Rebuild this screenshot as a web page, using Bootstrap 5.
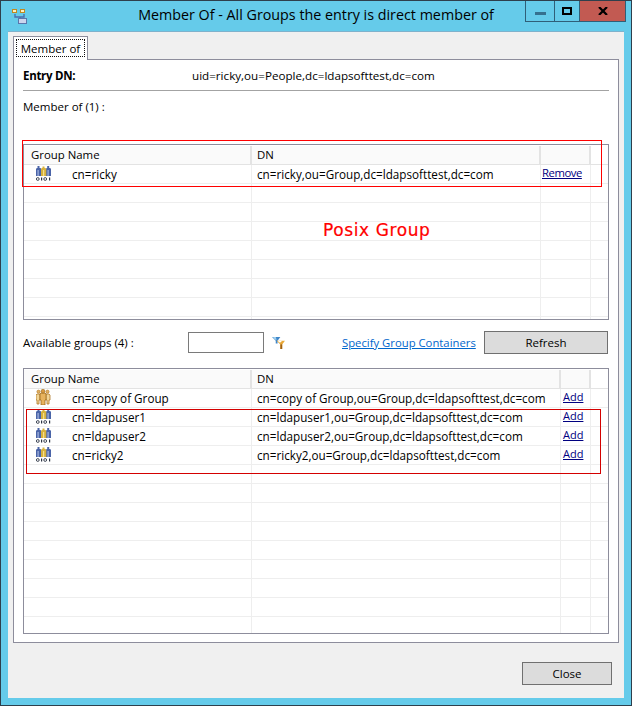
<!DOCTYPE html>
<html lang="en">
<head>
<meta charset="utf-8">
<title>Member Of</title>
<link href="https://cdn.jsdelivr.net/npm/bootstrap@5.3.0/dist/css/bootstrap.min.css" rel="stylesheet">
<style>
html,body{margin:0;background:#65cbea;}
body{font-family:"Open Sans","Liberation Sans",sans-serif;font-size:11.5px;line-height:18px;color:#000;}
.win{width:632px;height:706px;border:1px solid #2e3f4c;background:#65cbea;overflow:hidden;}
.titlebar{height:30px;display:grid;grid-template-columns:1fr auto 1fr;}
.wintitle{font-size:14.3px;line-height:28px;color:#000;}
.appicon{margin:7px 0 0 10px;display:block;}
.winbtns{height:21px;border:1px solid #2f5f78;border-top:0;margin-right:5px;}
.winbtn{height:20px;border-right:1px solid #2f5f78;}
.wb-min{width:29px;}.wb-max{width:25px;}.wb-close{width:45px;border-right:0;background:#c25a52;}
.client{margin:0 7px;height:667px;background:#f0f0f0;border-top:1px solid #7fb2cc;padding-top:4px;}
.tabstrip.nav-tabs{border:0;margin-left:5px;height:23px;--bs-nav-tabs-border-width:0;}
.tabstrip .nav-link.active{width:75px;height:24px;padding:2px;margin:0;background:#fff;border:1px solid #8d8d9c;border-bottom:0;border-radius:0;color:#000;font-size:11.5px;line-height:17px;position:relative;z-index:2;}
.tabfocus{display:block;border:1px dotted #111;height:18px;text-align:center;}
.panel{margin-left:5px;width:606px;height:584px;background:#fff;border:1px solid #8d8d9c;padding:7px 9px 0;}
.rowline{height:18px;}
.dnlabel{width:169px;font-weight:700;letter-spacing:-.3px;}
.dnvalue{font-size:11.65px;}
.rule{height:1px;background:#a3a3a3;margin:5px 0 7px;}
.gridbox{border:1px solid #8d8d9c;padding:1px 0 1px 0;overflow:hidden;}
.gb-a{height:176px;margin-top:28px;}
.gb-b{height:266px;margin-top:14px;}
.gridtbl.table{table-layout:fixed;width:584px;margin:0;border-collapse:separate;border-spacing:0;--bs-table-bg:transparent;}
.gridtbl.table>:not(caption)>*>*{padding:0;height:19px;border:0;border-bottom:1px solid #eee;border-right:1px solid #eee;font-size:11.7px;line-height:18px;font-weight:400;color:#000;box-shadow:none;white-space:nowrap;overflow:hidden;vertical-align:top;}
.gridtbl.table>thead>tr>th{background:#fafafa;border-bottom:1px solid #e3e3e3;border-right:2px solid #e3e3e3;border-top:0;font-size:11.4px;}
.gridtbl.table>thead>tr>th.hd-end{border-right:0;background:#fff;}
.gridtbl.table>:not(caption)>*>.c-last{border-right:0;}
.gridtbl.table>thead>tr>th.hd-name{padding-left:7px;}
.gridtbl.table>thead>tr>th.hd-dn,.gridtbl.table>tbody>tr>td.c-dn{padding-left:5px;}
.gridtbl.table>tbody>tr>td.c-name{position:relative;padding-left:48px;}
.rowicon{position:absolute;left:12px;top:0;display:block;}
.gridtbl.table>tbody>tr>td.c-act{padding-left:1px;font-size:11.3px;letter-spacing:-.45px;}
.gridtbl.table>tbody>tr>td.c-add{padding-left:2px;font-size:11px;}
.cmdlink{color:#000080;text-decoration:underline;display:block;margin-top:-1px;}
.toolbar{height:23px;margin-top:11px;}
.availlabel{width:165px;}
.filterbox{width:76px;height:21px;border:1px solid #7a7a7a;background:#fff;padding:0;border-radius:0;}
.filtericon{margin:0 57px 0 8px;}
.speclink{color:#0066cc;text-decoration:underline;width:142px;font-size:11.3px;}
.graybtn.btn{background:#dcdcdc;border:1px solid #707070;border-radius:0;font-size:11.5px;line-height:18px;padding:1px 0;color:#000;height:23px;}
.bt-refresh.btn{width:124px;}
.bt-close.btn{width:90px;margin-left:514px;margin-top:19px;display:block;}
.boxred{position:absolute;border:1px solid #f00;pointer-events:none;}
.box-a{left:21px;top:139px;width:580px;height:47px;}
.box-b{left:25px;top:408px;width:575px;height:65px;border-color:#d40000;}
.posix{position:absolute;left:322px;top:218px;font-family:"DejaVu Sans",sans-serif;font-size:17px;line-height:22px;color:#f00;letter-spacing:.6px;-webkit-text-stroke:.2px #f00;}
</style>
</head>
<body>
<svg width="0" height="0" class="position-absolute">
  <symbol id="ldapgroup" viewBox="0 0 16 16">
    <path d="M1.5 1h2v2h1l.8 1v7H0V4l.8-1h.7z" fill="#4a64a8"/>
    <path d="M1.5 5h1.2v6H1.500z" fill="#a5b6e0"/>
    <path d="M10.500 1h2v2h1l.8 1v7H9.200V4l.8-1h.5z" fill="#4a64a8" transform="translate(.7 0)"/>
    <path d="M11.500 5h1.200v6h-1.200z" fill="#a5b6e0"/>
    <path d="M6.500 1.500h2V3h1l.8 1v7H5V4l.8-1h.7z" fill="#d8b23c"/>
    <path d="M7 5h1.200v6H7z" fill="#f3df90"/>
    <circle cx="1.800" cy="14" r="1.400" fill="none" stroke="#2c3444" stroke-width=".9"/>
    <rect x="5" y="12.500" width="1.200" height="3" fill="#2c3444"/>
    <circle cx="9.200" cy="14" r="1.400" fill="none" stroke="#2c3444" stroke-width=".9"/>
    <rect x="13" y="12.500" width="1.200" height="3" fill="#2c3444"/>
  </symbol>
  <symbol id="staticgroup" viewBox="0 0 16 16">
    <path d="M0 6l1-1h3v6H3v4H1v-4H0z" fill="#f2d596" stroke="#b07a2a" stroke-width=".8"/>
    <path d="M10 5h3l1 1v5h-1v4h-2v-4h-1z" fill="#f2d596" stroke="#b07a2a" stroke-width=".8"/>
    <path d="M4 5l1-1h4l1 1v6H9v5H5v-5H4z" fill="#e7b35e" stroke="#9c6a1c" stroke-width=".8"/>
    <circle cx="2.500" cy="2.700" r="1.600" fill="#e2b060" stroke="#b07a2a" stroke-width=".6"/>
    <circle cx="11.500" cy="2.700" r="1.600" fill="#e2b060" stroke="#b07a2a" stroke-width=".6"/>
    <circle cx="7" cy="2.200" r="1.900" fill="#d89a40" stroke="#9c6a1c" stroke-width=".6"/>
  </symbol>
</svg>
<div class="win position-relative d-flex flex-column">
  <div class="titlebar">
    <div><svg class="appicon" width="17" height="17" viewBox="0 0 17 17">
      <path d="M4 5v3h9V5M9 8v3" fill="none" stroke="#4a6fb0" stroke-width="1.400" transform="translate(0 1)"/>
      <rect x="1.500" y="1.500" width="4" height="3" fill="#fff0c0" stroke="#c08a20"/>
      <rect x="9.500" y="1.500" width="4" height="3" fill="#fff0c0" stroke="#c08a20"/>
      <rect x="7.500" y="10.500" width="8" height="5" fill="#ccd6ee" stroke="#5a76ac"/>
    </svg></div>
    <div class="wintitle">Member Of - All Groups the entry is direct member of</div>
    <div class="d-flex justify-content-end">
      <div class="winbtns d-flex">
        <div class="winbtn wb-min d-flex align-items-center justify-content-center"><svg width="11" height="3" class="mt-1"><rect width="11" height="3" fill="#35718f"/></svg></div>
        <div class="winbtn wb-max d-flex align-items-center justify-content-center"><svg width="10" height="8"><rect x="1" y="1" width="8" height="6" fill="none" stroke="#000" stroke-width="2"/></svg></div>
        <div class="winbtn wb-close d-flex align-items-center justify-content-center"><svg width="10" height="8"><path d="M1 0l8 8M9 0L1 8" stroke="#000" stroke-width="2.200"/></svg></div>
      </div>
    </div>
  </div>
  <div class="client">
    <ul class="nav nav-tabs tabstrip">
      <li class="nav-item"><span class="nav-link active"><span class="tabfocus">Member of</span></span></li>
    </ul>
    <div class="panel">
      <div class="rowline d-flex"><div class="dnlabel">Entry DN:</div><div class="dnvalue">uid=ricky,ou=People,dc=ldapsofttest,dc=com</div></div>
      <div class="rule"></div>
      <div class="rowline">Member of (1) :</div>
      <div class="gridbox gb-a">
        <table class="table gridtbl">
          <colgroup><col style="width:228px"><col style="width:289px"><col style="width:50px"><col></colgroup>
          <thead><tr><th class="hd-name">Group Name</th><th class="hd-dn">DN</th><th></th><th class="hd-end c-last"></th></tr></thead>
          <tbody>
            <tr><td class="c-name"><svg class="rowicon" width="16" height="16"><use href="#ldapgroup"/></svg>cn=ricky</td><td class="c-dn">cn=ricky,ou=Group,dc=ldapsofttest,dc=com</td><td class="c-act"><a class="cmdlink" href="#">Remove</a></td><td class="c-last"></td></tr>
            <tr><td></td><td></td><td></td><td class="c-last"></td></tr>
            <tr><td></td><td></td><td></td><td class="c-last"></td></tr>
            <tr><td></td><td></td><td></td><td class="c-last"></td></tr>
            <tr><td></td><td></td><td></td><td class="c-last"></td></tr>
            <tr><td></td><td></td><td></td><td class="c-last"></td></tr>
            <tr><td></td><td></td><td></td><td class="c-last"></td></tr>
            <tr><td></td><td></td><td></td><td class="c-last"></td></tr>
            <tr><td></td><td></td><td></td><td class="c-last"></td></tr>
          </tbody>
        </table>
      </div>
      <div class="toolbar d-flex align-items-center">
        <div class="availlabel">Available groups (4) :</div>
        <input class="filterbox" type="text" aria-label="Filter">
        <svg class="filtericon" width="13" height="12" viewBox="0 0 14 13">
          <path d="M0 0h9L6 4v3H4V4z" fill="#3f86c8"/><path d="M1 0h3l1 3H3z" fill="#9fd0f0"/>
          <path d="M5 4h9l-3 4v5H9V8z" fill="#e8a838"/><path d="M6 4h5L9 6H8z" fill="#fff"/>
          <rect x="9" y="8" width="2" height="5" fill="#a06010"/>
        </svg>
        <a class="speclink" href="#">Specify Group Containers</a>
        <button class="btn graybtn bt-refresh" type="button">Refresh</button>
      </div>
      <div class="gridbox gb-b">
        <table class="table gridtbl">
          <colgroup><col style="width:228px"><col style="width:309px"><col style="width:30px"><col></colgroup>
          <thead><tr><th class="hd-name">Group Name</th><th class="hd-dn">DN</th><th></th><th class="hd-end c-last"></th></tr></thead>
          <tbody>
            <tr><td class="c-name"><svg class="rowicon" width="16" height="16"><use href="#staticgroup"/></svg>cn=copy of Group</td><td class="c-dn">cn=copy of Group,ou=Group,dc=ldapsofttest,dc=com</td><td class="c-add"><a class="cmdlink" href="#">Add</a></td><td class="c-last"></td></tr>
            <tr><td class="c-name"><svg class="rowicon" width="16" height="16"><use href="#ldapgroup"/></svg>cn=ldapuser1</td><td class="c-dn">cn=ldapuser1,ou=Group,dc=ldapsofttest,dc=com</td><td class="c-add"><a class="cmdlink" href="#">Add</a></td><td class="c-last"></td></tr>
            <tr><td class="c-name"><svg class="rowicon" width="16" height="16"><use href="#ldapgroup"/></svg>cn=ldapuser2</td><td class="c-dn">cn=ldapuser2,ou=Group,dc=ldapsofttest,dc=com</td><td class="c-add"><a class="cmdlink" href="#">Add</a></td><td class="c-last"></td></tr>
            <tr><td class="c-name"><svg class="rowicon" width="16" height="16"><use href="#ldapgroup"/></svg>cn=ricky2</td><td class="c-dn">cn=ricky2,ou=Group,dc=ldapsofttest,dc=com</td><td class="c-add"><a class="cmdlink" href="#">Add</a></td><td class="c-last"></td></tr>
            <tr><td></td><td></td><td></td><td class="c-last"></td></tr>
            <tr><td></td><td></td><td></td><td class="c-last"></td></tr>
            <tr><td></td><td></td><td></td><td class="c-last"></td></tr>
            <tr><td></td><td></td><td></td><td class="c-last"></td></tr>
            <tr><td></td><td></td><td></td><td class="c-last"></td></tr>
            <tr><td></td><td></td><td></td><td class="c-last"></td></tr>
            <tr><td></td><td></td><td></td><td class="c-last"></td></tr>
            <tr><td></td><td></td><td></td><td class="c-last"></td></tr>
            <tr><td></td><td></td><td></td><td class="c-last"></td></tr>
          </tbody>
        </table>
      </div>
    </div>
    <button class="btn graybtn bt-close" type="button">Close</button>
  </div>
  <div class="boxred box-a"></div>
  <div class="posix">Posix Group</div>
  <div class="boxred box-b"></div>
</div>
</body>
</html>
